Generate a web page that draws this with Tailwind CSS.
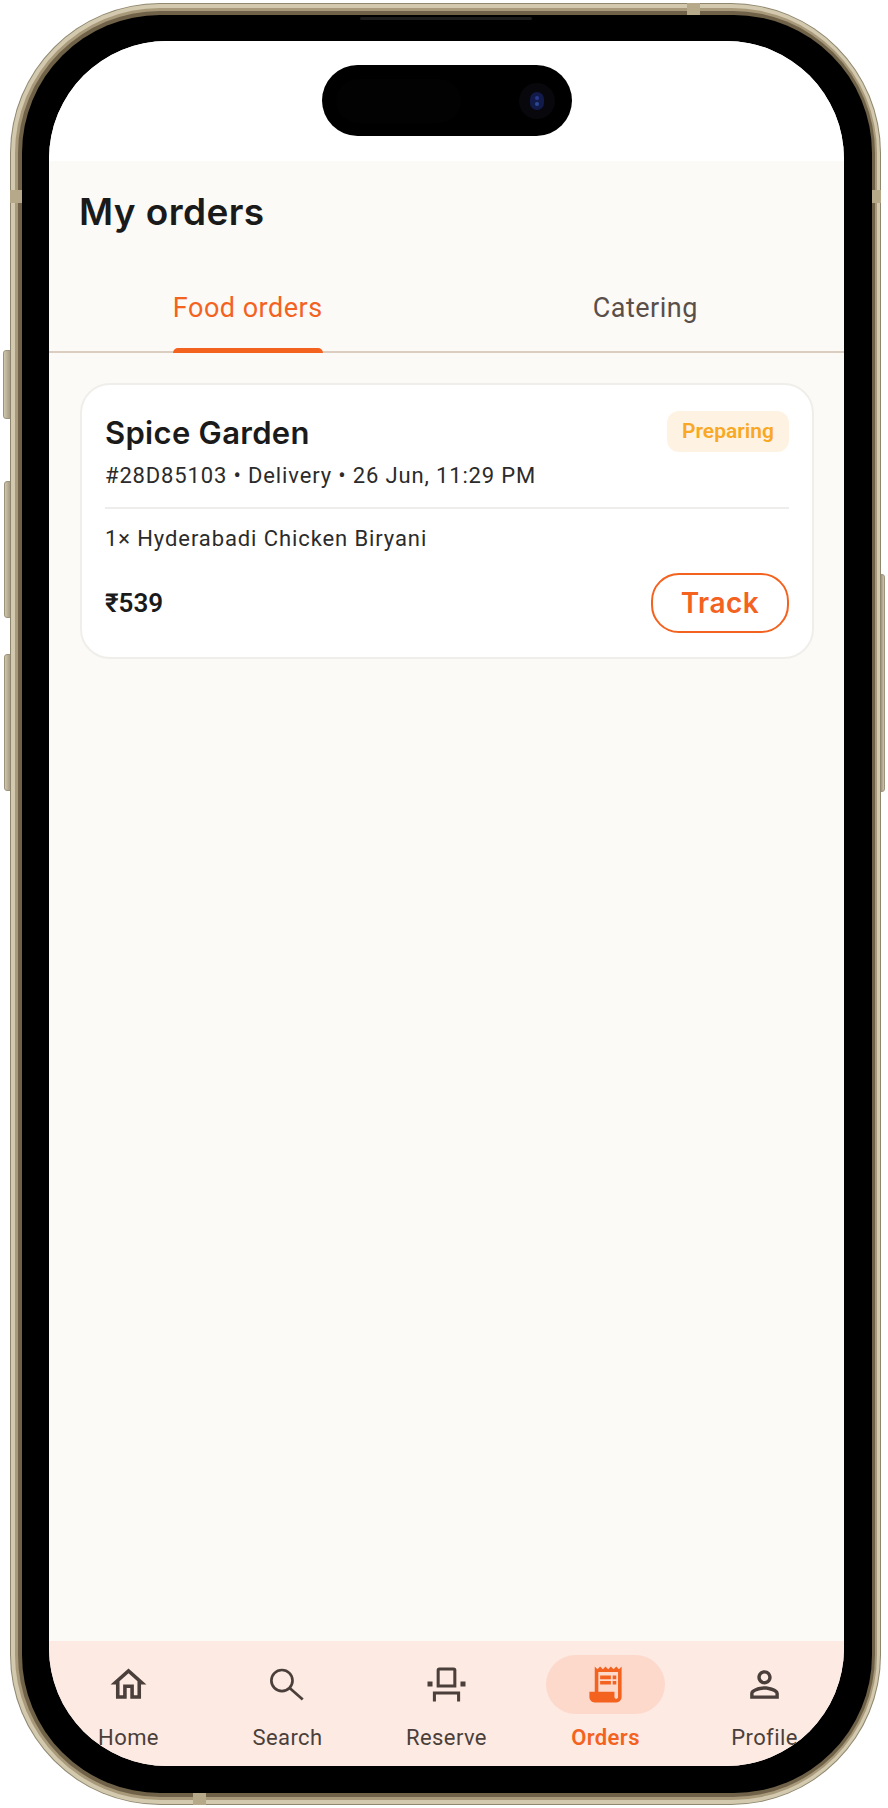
<!DOCTYPE html>
<html lang="en">
<head>
    <meta charset="UTF-8">
    <title>My orders</title>
    <script src="https://cdn.jsdelivr.net/npm/@tailwindcss/browser@4"></script>
</head>
<body class="bg-white">
    <div class="relative w-[888px] h-[1808px] pl-[10px] pt-[3px] font-['Roboto',sans-serif]">
        <!-- side buttons -->
        <div class="absolute left-[3px] top-[350px] w-[9px] h-[69px] rounded-l-[3px] bg-gradient-to-r from-[#cfc6ac] to-[#9d927a] border border-[#9d927a]"></div>
        <div class="absolute left-[4px] top-[481px] w-[8px] h-[137px] rounded-l-[3px] bg-gradient-to-r from-[#cfc6ac] to-[#9d927a] border border-[#9d927a]"></div>
        <div class="absolute left-[4px] top-[654px] w-[8px] h-[137px] rounded-l-[3px] bg-gradient-to-r from-[#cfc6ac] to-[#9d927a] border border-[#9d927a]"></div>
        <div class="absolute left-[880px] top-[574px] w-[5px] h-[218px] rounded-r-[3px] bg-gradient-to-l from-[#cfc6ac] to-[#9d927a] border border-[#9d927a]"></div>

        <!-- phone frame -->
        <div class="relative w-[871px] h-[1802px] rounded-[150px] bg-[#8f866f] p-[1px]">
            <div class="h-full rounded-[149px] bg-[#d2c9ae] pt-[4px] pb-[4px] pl-[4px] pr-[3px]">
                <div class="h-full rounded-[145px] bg-[#a8997a] pt-[3px] pb-[3px] pl-[3px] pr-[2px]">
                    <div class="h-full rounded-[142px] bg-[#6f6248] pt-[4px] pb-[4px] pl-[4px] pr-[3px]">
                        <div class="h-full rounded-[138px] bg-black pt-[26px] pl-[27px]">
                            <!-- screen -->
                            <div class="relative flex flex-col w-[795px] h-[1725px] rounded-[118px] overflow-hidden bg-[#fcfaf6]">
                                <div class="h-[120px] shrink-0 bg-white"></div>
                                <h1 class="pl-[30px] pt-[28px] h-[78px] text-[37px] leading-[46px] font-semibold tracking-[0.4px] text-[#1a1a1a] font-['Inter',sans-serif]">My orders</h1>

                                <div class="flex h-[114px] shrink-0 border-b-2 border-[#dccdc1]">
                                    <div class="relative flex-1 flex justify-center pt-[49px]">
                                        <span class="text-[27px] leading-[40px] text-[#f4621f] tracking-[0.5px]">Food orders</span>
                                        <div class="absolute left-[124px] bottom-[-2px] w-[150px] h-[5px] rounded-t-[5px] bg-[#f4621f]"></div>
                                    </div>
                                    <div class="flex-1 flex justify-center pt-[49px]">
                                        <span class="text-[27px] leading-[40px] text-[#5a4f49] tracking-[0.5px]">Catering</span>
                                    </div>
                                </div>

                                <!-- order card -->
                                <div class="ml-[31px] mr-[30px] mt-[30px] h-[276px] rounded-[30px] bg-white border-2 border-[#f0eeea] px-[23px] pt-[26px]">
                                    <div class="flex justify-between h-[43px]">
                                        <span class="text-[31px] leading-[44px] font-semibold tracking-[0.3px] text-[#1a1a1a] font-['Inter',sans-serif]">Spice Garden</span>
                                        <span class="flex items-center justify-center w-[122px] h-[41px] rounded-[12px] bg-[#fef3e2] text-[21px] font-semibold text-[#f9a825]">Preparing</span>
                                    </div>
                                    <p class="mt-[7px] text-[22px] leading-[30px] tracking-[0.85px] text-[#2b2b2b]">#28D85103 • Delivery • 26 Jun, 11:29 PM</p>
                                    <div class="mt-[16px] h-[2px] bg-[#efedeb]"></div>
                                    <p class="mt-[15px] text-[22px] leading-[30px] tracking-[0.9px] text-[#2b2b2b]">1× Hyderabadi Chicken Biryani</p>
                                    <div class="flex justify-between items-center mt-[19px]">
                                        <span class="text-[26px] font-semibold text-[#1a1a1a]">₹539</span>
                                        <span class="flex items-center justify-center w-[138px] h-[60px] rounded-[28px] border-2 border-[#f4621f] text-[28px] font-semibold tracking-[0.5px] text-[#f4621f] font-['Inter',sans-serif]">Track</span>
                                    </div>
                                </div>

                                <!-- bottom nav -->
                                <nav class="mt-auto grid grid-cols-5 h-[125px] bg-[#fdeae3] text-[22px] tracking-[0.4px] text-[#4a3f3a]">
                                    <div class="flex flex-col items-center pt-[14px]">
                                        <div class="flex items-center justify-center w-[119px] h-[59px]">
                                            <svg class="w-[43px] h-[43px]" viewBox="0 0 24 24" fill="currentColor"><path d="M12 5.69l5 4.5V18h-2v-6H9v6H7v-7.81l5-4.5M12 3L2 12h3v8h6v-6h2v6h6v-8h3L12 3z"/></svg>
                                        </div>
                                        <span class="mt-[9px] leading-[30px]">Home</span>
                                    </div>
                                    <div class="flex flex-col items-center pt-[14px]">
                                        <div class="flex items-center justify-center w-[119px] h-[59px]">
                                            <svg class="w-[43px] h-[43px]" viewBox="0 0 24 24" fill="none" stroke="currentColor" stroke-width="1.5"><circle cx="8.9" cy="9.8" r="5.9"/><path d="M13.2 13.9l7.3 6.5"/></svg>
                                        </div>
                                        <span class="mt-[9px] leading-[30px]">Search</span>
                                    </div>
                                    <div class="flex flex-col items-center pt-[14px]">
                                        <div class="flex items-center justify-center w-[119px] h-[59px]">
                                            <svg class="w-[43px] h-[43px]" viewBox="0 0 24 24" fill="currentColor"><path fill-rule="evenodd" d="M8 2.5h8a1.5 1.5 0 011.5 1.5v9.7h-11V4A1.5 1.5 0 018 2.5zM8.2 4.2v7.8h7.6V4.2zM1.4 10.3h2.8v2.8H1.4zM19.8 10.3h2.8v2.8h-2.8zM4.4 15.9h15.2v5.6h-1.7v-3.9H6.1v3.9H4.4z"/></svg>
                                        </div>
                                        <span class="mt-[9px] leading-[30px]">Reserve</span>
                                    </div>
                                    <div class="flex flex-col items-center pt-[14px]">
                                        <div class="flex items-center justify-center w-[119px] h-[59px] rounded-full bg-[#fdd9cc] text-[#f4621f]">
                                            <svg class="w-[43px] h-[43px]" viewBox="0 0 24 24" fill="currentColor"><path d="M19.5 3.5L18 2l-1.5 1.5L15 2l-1.5 1.5L12 2l-1.5 1.5L9 2 7.5 3.5 6 2v14H3v3c0 1.66 1.34 3 3 3h12c1.66 0 3-1.34 3-3V2l-1.5 1.5zM19 19c0 .55-.45 1-1 1s-1-.45-1-1v-3H8V5h11v14z"/><path d="M9 7h6v2H9zM16 7h2v2h-2zM9 10h6v2H9zM16 10h2v2h-2z"/></svg>
                                        </div>
                                        <span class="mt-[9px] leading-[30px] font-semibold text-[#f4621f]">Orders</span>
                                    </div>
                                    <div class="flex flex-col items-center pt-[14px]">
                                        <div class="flex items-center justify-center w-[119px] h-[59px]">
                                            <svg class="w-[43px] h-[43px]" viewBox="0 0 24 24" fill="currentColor"><path d="M12 5.9c1.16 0 2.1.94 2.1 2.1s-.94 2.1-2.1 2.1S9.9 9.16 9.9 8s.94-2.1 2.1-2.1m0 9c2.97 0 6.1 1.46 6.1 2.1v1.1H5.9V17c0-.64 3.13-2.1 6.1-2.1M12 4C9.79 4 8 5.79 8 8s1.79 4 4 4 4-1.79 4-4-1.79-4-4-4zm0 9c-2.67 0-8 1.34-8 4v3h16v-3c0-2.66-5.33-4-8-4z"/></svg>
                                        </div>
                                        <span class="mt-[9px] leading-[30px]">Profile</span>
                                    </div>
                                </nav>
                            </div>
                        </div>
                    </div>
                </div>
            </div>
            <!-- antenna bands -->
            <div class="absolute left-[677px] top-0 w-[13px] h-[12px] bg-[#b5a98a]"></div>
            <div class="absolute left-[183px] bottom-0 w-[13px] h-[12px] bg-[#b5a98a]"></div>
            <div class="absolute left-0 top-[187px] w-[12px] h-[13px] bg-[#b5a98a]"></div>
            <div class="absolute right-0 top-[187px] w-[9px] h-[13px] bg-[#b5a98a]"></div>
            <!-- dynamic island -->
            <div class="absolute left-[312px] top-[62px] flex items-center justify-between w-[250px] h-[71px] pl-[14px] pr-[17px] rounded-full bg-black">
                <div class="w-[125px] h-[44px] rounded-full bg-[#020202]"></div>
                <div class="flex items-center justify-center w-[36px] h-[36px] rounded-full bg-[#07070c]">
                    <div class="flex flex-col items-center justify-center gap-[2px] w-[14px] h-[18px] rounded-full bg-[#121a4a]">
                        <div class="w-[4px] h-[4px] rounded-full bg-[#2a3a90]"></div>
                        <div class="w-[4px] h-[4px] rounded-full bg-[#2a4a90]"></div>
                    </div>
                </div>
            </div>
            <!-- speaker -->
            <div class="absolute left-[350px] top-[14px] w-[172px] h-[3px] rounded-full bg-[#1c1c1c]"></div>
        </div>
    </div>
</body>
</html>
